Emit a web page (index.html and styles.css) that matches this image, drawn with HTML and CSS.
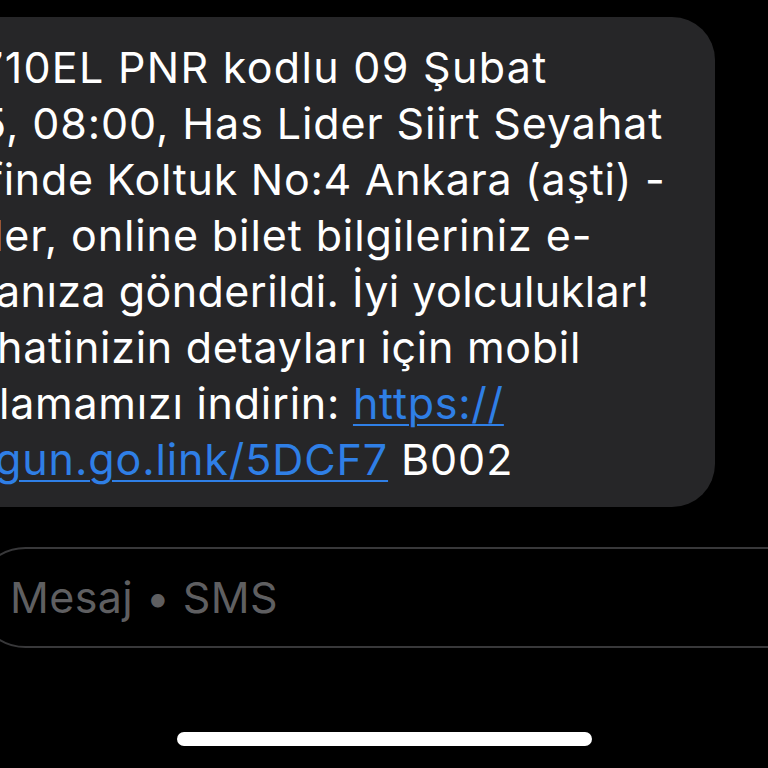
FILE: index.html
```html
<!DOCTYPE html>
<html lang="tr">
<head>
<meta charset="utf-8">
<title>Mesajlar</title>
<link rel="stylesheet" href="styles.css">
</head>
<body>
<div class="screen">
  <div class="thread">
    <div class="bubble">
      <div class="ln ln-1">710EL PNR kodlu 09 Şubat</div>
      <div class="ln ln-2">5, 08:00, Has Lider Siirt Seyahat</div>
      <div class="ln ln-3">finde Koltuk No:4 Ankara (aşti) -</div>
      <div class="ln ln-4">ler, online bilet bilgileriniz e-</div>
      <div class="ln ln-5">anıza gönderildi. İyi yolculuklar!</div>
      <div class="ln ln-6">hatinizin detayları için mobil</div>
      <div class="ln ln-7">lamamızı indirin: <a class="link" href="#">https://</a></div>
      <div class="ln ln-8"><a class="link" href="#">gun.go.link/5DCF7</a> B002</div>
    </div>
  </div>
  <div class="composer">
    <div class="field">
      <span class="placeholder">Mesaj • SMS</span>
    </div>
  </div>
  <div class="home-bar"></div>
</div>
</body>
</html>
```

FILE: styles.css
```css
html, body {
  margin: 0;
  padding: 0;
  background: #000;
}
body {
  width: 768px;
  height: 768px;
  overflow: hidden;
  font-family: Inter, "Noto Sans", "Liberation Sans", sans-serif;
  -webkit-font-smoothing: antialiased;
}
.screen {
  display: flex;
  flex-direction: column;
  width: 768px;
  height: 768px;
}
.thread {
  padding-top: 17px;
  display: flex;
}
.bubble {
  margin-left: -80px;
  width: 795px;
  box-sizing: border-box;
  background: #262628;
  border-radius: 43px;
  padding: 22px 0 20px 80px;
  color: #fff;
  font-size: 43px;
  letter-spacing: 0.9px;
  line-height: 56px;
  white-space: nowrap;
}
.ln-1 { margin-left: -21px; letter-spacing: 1.3px; }
.ln-2 { margin-left: -20px; }
.ln-3 { margin-left: -13px; letter-spacing: 0.72px; }
.ln-4 { margin-left: -7px; }
.ln-5 { margin-left: -4px; letter-spacing: 0.45px; }
.ln-6 { margin-left: -3px; letter-spacing: 0.72px; }
.ln-7 { margin-left: -1px; letter-spacing: 0.75px; }
.ln-8 { margin-left: -5px; }
.link {
  color: #2f7fe6;
  text-decoration: underline;
  text-decoration-thickness: 2px;
  text-underline-offset: 5px;
}
.composer {
  margin-top: 40px;
  display: flex;
}
.field {
  margin-left: -25px;
  width: 900px;
  flex: none;
  height: 101px;
  box-sizing: border-box;
  border: 2px solid #38383a;
  border-radius: 51px;
  display: flex;
  align-items: center;
  padding-left: 33px;
}
.placeholder {
  color: #5f5f61;
  font-size: 43px;
  letter-spacing: 0.4px;
  line-height: 1;
}
.home-bar {
  margin: 84px auto 0;
  width: 415px;
  height: 14px;
  border-radius: 7px;
  background: #fff;
}
```
